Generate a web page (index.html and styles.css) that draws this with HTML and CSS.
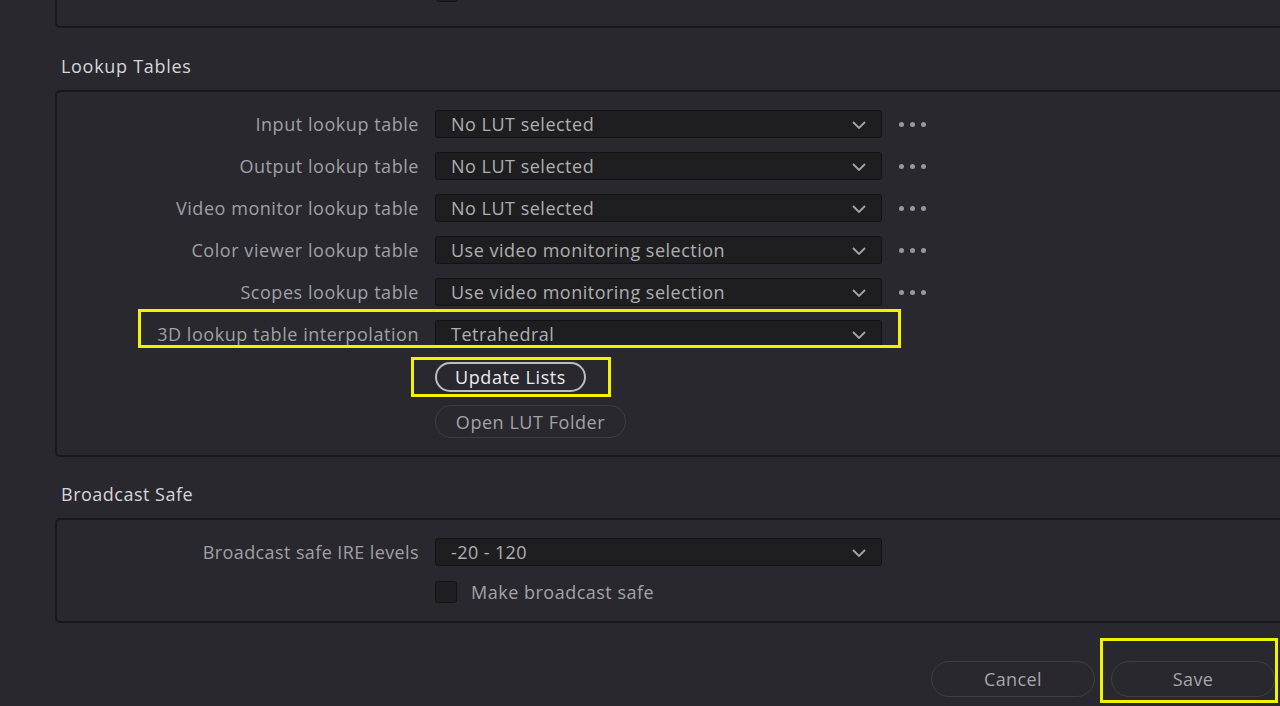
FILE: index.html
```html
<!DOCTYPE html>
<html lang="en">
<head>
    <meta charset="UTF-8">
    <title>Project Settings - Color Management</title>
    <link rel="stylesheet" href="styles.css">
</head>
<body>
    <div class="page">
        <!-- previous section, scrolled mostly out of view -->
        <div class="panel panel-top">
            <div class="top-check"></div>
        </div>

        <h2 class="section-title">Lookup Tables</h2>
        <div class="panel lut-panel">
            <div class="row">
                <label>Input lookup table</label>
                <div class="select">No LUT selected<svg class="chev" viewBox="0 0 14 8"><polyline points="1,1 7,7 13,1"/></svg></div>
                <div class="dots"><i></i><i></i><i></i></div>
            </div>
            <div class="row">
                <label>Output lookup table</label>
                <div class="select">No LUT selected<svg class="chev" viewBox="0 0 14 8"><polyline points="1,1 7,7 13,1"/></svg></div>
                <div class="dots"><i></i><i></i><i></i></div>
            </div>
            <div class="row">
                <label>Video monitor lookup table</label>
                <div class="select">No LUT selected<svg class="chev" viewBox="0 0 14 8"><polyline points="1,1 7,7 13,1"/></svg></div>
                <div class="dots"><i></i><i></i><i></i></div>
            </div>
            <div class="row">
                <label>Color viewer lookup table</label>
                <div class="select">Use video monitoring selection<svg class="chev" viewBox="0 0 14 8"><polyline points="1,1 7,7 13,1"/></svg></div>
                <div class="dots"><i></i><i></i><i></i></div>
            </div>
            <div class="row">
                <label>Scopes lookup table</label>
                <div class="select">Use video monitoring selection<svg class="chev" viewBox="0 0 14 8"><polyline points="1,1 7,7 13,1"/></svg></div>
                <div class="dots"><i></i><i></i><i></i></div>
            </div>
            <div class="row">
                <label>3D lookup table interpolation</label>
                <div class="select">Tetrahedral<svg class="chev" viewBox="0 0 14 8"><polyline points="1,1 7,7 13,1"/></svg></div>
                <div class="mark mark-interp"></div>
            </div>
            <div class="btn-col">
                <div class="btn-wrap">
                    <button class="pill pill-active">Update Lists</button>
                    <div class="mark mark-update"></div>
                </div>
                <button class="pill pill-dim">Open LUT Folder</button>
            </div>
        </div>

        <h2 class="section-title bs-title">Broadcast Safe</h2>
        <div class="panel bs-panel">
            <div class="row bs-row">
                <label>Broadcast safe IRE levels</label>
                <div class="select">-20 - 120<svg class="chev" viewBox="0 0 14 8"><polyline points="1,1 7,7 13,1"/></svg></div>
            </div>
            <div class="check-row">
                <span class="checkbox"></span>
                <span class="check-label">Make broadcast safe</span>
            </div>
        </div>

        <div class="footer">
            <button class="pill footer-btn">Cancel</button>
            <div class="btn-wrap">
                <button class="pill footer-btn">Save</button>
                <div class="mark mark-save"></div>
            </div>
        </div>
    </div>
</body>
</html>
```

FILE: styles.css
```css
html, body {
    margin: 0;
    height: 100%;
    overflow: hidden;
}

body {
    background-color: #28282e;
    font-family: "Open Sans", "Noto Sans", sans-serif;
    color: #a3a3a6;
}

.page {
    padding-left: 55px;
}

.panel {
    border: 2px solid #18181b;
    border-radius: 5px;
    margin-right: -40px;
    box-sizing: border-box;
}

.panel-top {
    height: 50px;
    margin-top: -22px;
    position: relative;
}

.top-check {
    position: absolute;
    left: 379px;
    bottom: 24px;
    width: 20px;
    height: 20px;
    background: #1f1f23;
    border: 1px solid #141416;
    border-radius: 3px;
}

.section-title {
    margin: 26px 0 0 6px;
    height: 36px;
    font-size: 18px;
    font-weight: normal;
    color: #d6d6d8;
    line-height: 24px;
    letter-spacing: 0.7px;
}

.lut-panel {
    padding: 18px 0 17px 0;
}

.row {
    display: flex;
    align-items: center;
    height: 28px;
    margin-bottom: 14px;
    position: relative;
}

.row label {
    width: 362px;
    text-align: right;
    font-size: 18px;
    color: #a0a0a4;
    margin-right: 16px;
    white-space: nowrap;
    letter-spacing: 0.55px;
}

.select {
    width: 447px;
    height: 28px;
    box-sizing: border-box;
    background: #1e1e21;
    border: 1px solid #131315;
    border-radius: 3px;
    padding-left: 15px;
    font-size: 18px;
    line-height: 26px;
    color: #aeaeb1;
    position: relative;
    letter-spacing: 0.5px;
}

.chev {
    position: absolute;
    right: 15px;
    top: 10px;
    width: 14px;
    height: 8px;
    fill: none;
    stroke: #a5a5a8;
    stroke-width: 1.8;
}

.dots {
    display: flex;
    gap: 6px;
    margin-left: 17px;
}

.dots i {
    width: 5px;
    height: 5px;
    border-radius: 50%;
    background: #98989c;
}

.btn-col {
    display: flex;
    flex-direction: column;
    align-items: flex-start;
    gap: 13px;
    padding-left: 378px;
}

.btn-wrap {
    position: relative;
}

.pill {
    font-family: "Open Sans", "Noto Sans", sans-serif;
    font-size: 18px;
    border-radius: 16px;
    background: transparent;
    padding: 0;
    margin: 0;
    display: block;
}

.pill-active {
    width: 151px;
    height: 30px;
    border: 2px solid #bdbdc0;
    color: #ececee;
    letter-spacing: 0.6px;
}

.pill-dim {
    width: 191px;
    height: 33px;
    border: 1px solid #3d3d43;
    color: #a3a3a6;
    letter-spacing: 0.55px;
}

.mark {
    position: absolute;
    border: 3px solid #f2f200;
    box-sizing: border-box;
    pointer-events: none;
}

.mark-interp {
    left: 81px;
    top: -11px;
    width: 763px;
    height: 39px;
}

.mark-update {
    left: -24px;
    top: -5px;
    width: 200px;
    height: 40px;
}

.bs-title {
    margin-top: 25px;
    height: 36px;
    letter-spacing: 0.5px;
}

.bs-panel {
    padding: 18px 0 17px 0;
}

.bs-row label {
    letter-spacing: 0.4px;
}

.bs-row .select {
    letter-spacing: 0.4px;
}

.check-row {
    display: flex;
    align-items: center;
    padding-left: 378px;
    margin-top: 1px;
}

.checkbox {
    width: 22px;
    height: 22px;
    box-sizing: border-box;
    background: #1f1f23;
    border: 1px solid #121214;
    border-radius: 3px;
    margin-right: 14px;
}

.check-label {
    font-size: 18px;
    color: #a3a3a6;
    letter-spacing: 0.5px;
}

.footer {
    display: flex;
    justify-content: flex-end;
    gap: 16px;
    margin-top: 38px;
    padding-right: 5px;
}

.footer-btn {
    width: 164px;
    height: 36px;
    border: 1px solid #3f3f45;
    border-radius: 18px;
    color: #a6a6a9;
    letter-spacing: 0.4px;
}

.mark-save {
    left: -11px;
    top: -23px;
    width: 178px;
    height: 65px;
}
```
